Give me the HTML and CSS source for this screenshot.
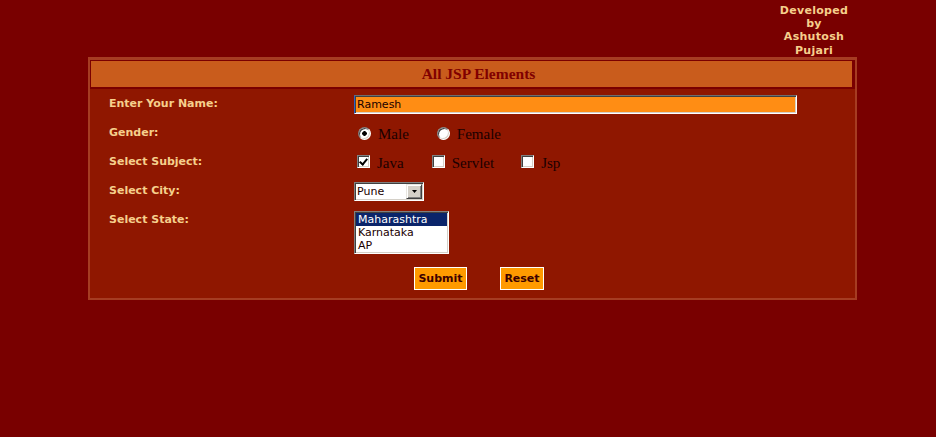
FILE: index.html
```html
<!DOCTYPE html>
<html>
<head>
<meta charset="utf-8">
<title>All JSP Elements</title>
<link rel="stylesheet" href="styles.css">
</head>
<body>
<div class="topbar">
  <div class="credit">Developed<br>by<br>Ashutosh<br>Pujari</div>
</div>
<form class="panel">
  <div class="panel-title">All JSP Elements</div>
  <div class="fields">
    <label class="lbl" for="name">Enter Your Name:</label>
    <div class="ctl"><input id="name" class="txt" type="text" value="Ramesh"></div>

    <div class="lbl">Gender:</div>
    <div class="ctl row">
      <input type="radio" name="g" class="radio first" checked><span class="opt">Male</span>
      <input type="radio" name="g" class="radio next"><span class="opt">Female</span>
    </div>

    <div class="lbl">Select Subject:</div>
    <div class="ctl row">
      <input type="checkbox" class="check first" checked><span class="opt opt-cb">Java</span>
      <input type="checkbox" class="check next"><span class="opt opt-cb">Servlet</span>
      <input type="checkbox" class="check next2"><span class="opt opt-cb">Jsp</span>
    </div>

    <div class="lbl">Select City:</div>
    <div class="ctl">
      <div class="dropdown">
        <select class="sel"><option>Pune</option><option>Mumbai</option></select>
        <span class="drop-btn"><svg width="5" height="3" viewBox="0 0 5 3"><polygon points="0,0 5,0 2.5,3" fill="#000"/></svg></span>
      </div>
    </div>

    <div class="lbl">Select State:</div>
    <div class="ctl">
      <div class="listbox" role="listbox">
        <div class="item selected">Maharashtra</div>
        <div class="item">Karnataka</div>
        <div class="item">AP</div>
      </div>
    </div>

    <div class="ctl buttons">
      <button type="button" class="btn submit">Submit</button>
      <button type="button" class="btn reset">Reset</button>
    </div>
  </div>
</form>
</body>
</html>
```
FILE: styles.css
```css
html, body {
  margin: 0;
  padding: 0;
  background: #790000;
  height: 100%;
}
body {
  font-family: "DejaVu Sans", Verdana, sans-serif;
  font-size: 11px;
}
.topbar {
  height: 57px;
  display: flex;
  justify-content: flex-end;
  padding-right: 72px;
  box-sizing: border-box;
}
.credit {
  width: 100px;
  padding-top: 4px;
  text-align: center;
  font-weight: bold;
  font-size: 11px;
  line-height: 13.2px;
  color: #f6cf8c;
  letter-spacing: 0.3px;
}
.panel {
  margin: 0 0 0 88px;
  width: 769px;
  box-sizing: border-box;
  border: 2px solid #a63c22;
  border-top-width: 3px;
  background: #8f1700;
}
.panel-title {
  height: 29px;
  box-sizing: border-box;
  border-style: solid;
  border-color: #7a0000;
  border-width: 1px 3px 2px 1px;
  background: #c95c1c;
  color: #800000;
  font-family: "Liberation Serif", "Times New Roman", serif;
  font-weight: bold;
  font-size: 15.5px;
  line-height: 26px;
  text-align: center;
  padding-left: 14px;
}
.fields {
  display: grid;
  grid-template-columns: 245px 1fr;
  grid-template-rows: 29px 29px 29px 29px 56px 23px;
  padding: 6px 0 8px 19px;
}
.lbl {
  padding-top: 2px;
  font-weight: bold;
  font-size: 11px;
  line-height: 13px;
  color: #f6cf8c;
}
.ctl {
  min-width: 0;
}
.row {
  display: flex;
  align-items: flex-start;
}
.txt {
  display: block;
  width: 443px;
  height: 19px;
  box-sizing: border-box;
  margin: 0;
  padding: 0 1px 0 2px;
  border: 1px solid;
  border-color: #6e6e6e #fff #fff #2a63c8;
  box-shadow: inset 1px 1px #404040, inset -1px -1px #d4d0c8;
  background: #ff8d14;
  color: #200000;
  font-family: "DejaVu Sans", Verdana, sans-serif;
  font-size: 11px;
  outline: none;
}
.opt {
  margin-top: 2px;
  margin-left: 7px;
  font-family: "Liberation Serif", "Times New Roman", serif;
  font-size: 15px;
  line-height: 17px;
  color: #1a0000;
}
.opt-cb {
  margin-top: 2px;
}
.radio {
  -webkit-appearance: none;
  appearance: none;
  width: 13px;
  height: 13px;
  margin: 3px 0 0 0;
  box-sizing: border-box;
  border-radius: 50%;
  border: 1px solid;
  border-color: #808080 #fff #fff #808080;
  box-shadow: inset 1px 1px #404040, inset -1px -1px #d4d0c8;
  background: #fff;
  flex: none;
}
.radio:checked {
  background: radial-gradient(circle, #000 0, #000 2px, #fff 2.6px);
}
.radio.first { margin-left: 4px; }
.radio.next { margin-left: 28px; }
.check {
  -webkit-appearance: none;
  appearance: none;
  position: relative;
  width: 13px;
  height: 13px;
  margin: 2px 0 0 0;
  box-sizing: border-box;
  border: 1px solid;
  border-color: #808080 #fff #fff #808080;
  box-shadow: inset 1px 1px #404040, inset -1px -1px #d4d0c8;
  background: #fff;
  flex: none;
}
.check:checked::after {
  content: "";
  position: absolute;
  left: 3px;
  top: 1px;
  width: 3px;
  height: 6px;
  border: solid #000;
  border-width: 0 2px 2px 0;
  transform: rotate(40deg);
}
.check.first { margin-left: 3px; }
.check.next { margin-left: 28px; }
.check.next2 { margin-left: 27px; }
.dropdown {
  position: relative;
  width: 70px;
  height: 19px;
}
.sel {
  -webkit-appearance: none;
  appearance: none;
  display: block;
  width: 70px;
  height: 19px;
  box-sizing: border-box;
  margin: 0;
  padding: 0 0 0 2px;
  border: 1px solid;
  border-color: #808080 #fff #fff #808080;
  box-shadow: inset 1px 1px #404040, inset -1px -1px #d4d0c8;
  background: #fff;
  color: #1a0000;
  font-family: "DejaVu Sans", Verdana, sans-serif;
  font-size: 11px;
  outline: none;
}
.drop-btn {
  position: absolute;
  right: 2px;
  top: 2px;
  width: 16px;
  height: 15px;
  box-sizing: border-box;
  background: #d4d0c8;
  border: 1px solid;
  border-color: #e8e6e0 #404040 #404040 #e8e6e0;
  box-shadow: inset 1px 1px #fff, inset -1px -1px #808080;
  display: flex;
  align-items: center;
  justify-content: center;
  pointer-events: none;
}
.drop-btn svg { display: block; }
.listbox {
  width: 95px;
  height: 43px;
  box-sizing: border-box;
  border: 1px solid;
  border-color: #808080 #fff #fff #808080;
  box-shadow: inset 1px 1px #404040, inset -1px -1px #d4d0c8;
  background: #fff;
  padding: 1px;
}
.item {
  height: 13px;
  line-height: 13px;
  padding-left: 2px;
  color: #1a0000;
  font-size: 11px;
  white-space: nowrap;
}
.item.selected {
  background: #0a246a;
  color: #fff;
}
.buttons {
  grid-column: 2;
  display: flex;
  align-items: flex-start;
}
.btn {
  height: 23px;
  box-sizing: border-box;
  margin: 0;
  padding: 0;
  border: 1px solid #fff;
  background: #ff9a00;
  color: #3c0000;
  font-family: "DejaVu Sans", Verdana, sans-serif;
  font-weight: bold;
  font-size: 11px;
  line-height: 21px;
  text-align: center;
}
.submit { margin-left: 60px; width: 53px; }
.reset { margin-left: 33px; width: 44px; }
```
